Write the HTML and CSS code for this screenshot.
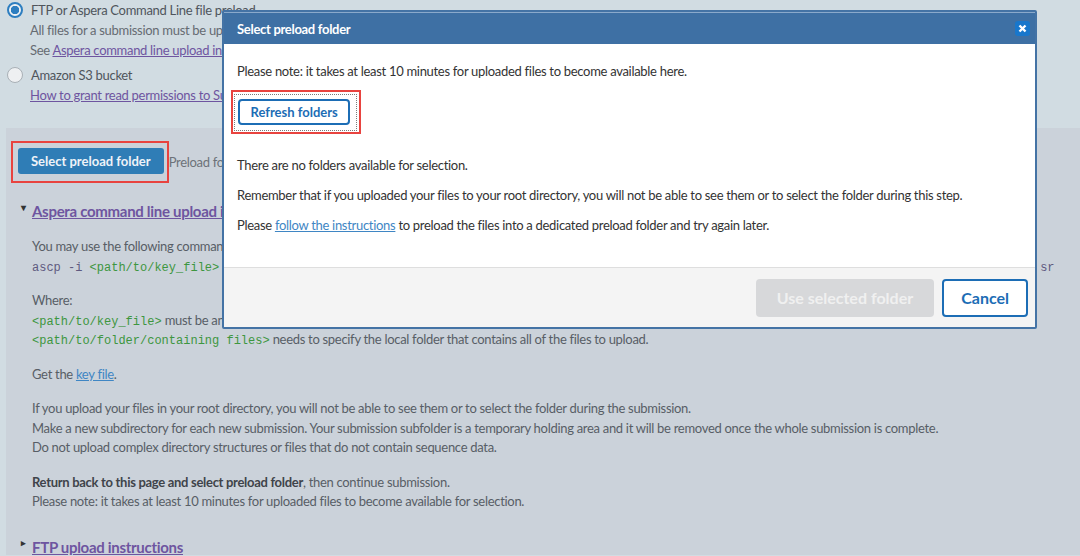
FILE: index.html
```html
<!DOCTYPE html>
<html lang="en">
<head>
    <meta charset="UTF-8">
    <meta name="viewport" content="width=device-width, initial-scale=1.0">
    <title>Select preload folder</title>
    <link rel="stylesheet" href="styles.css">
</head>
<body>
    <div class="options">
        <div class="option">
            <div class="option-title"><span class="radio checked"></span>FTP or Aspera Command Line file preload</div>
            <div class="option-text">All files for a submission must be uploaded into a dedicated preload folder.</div>
            <div class="option-text">See <a href="#" class="visited">Aspera command line upload instructions</a> below.</div>
        </div>
        <div class="option">
            <div class="option-title"><span class="radio"></span>Amazon S3 bucket</div>
            <div class="option-text"><a href="#" class="visited">How to grant read permissions to Submission Portal</a></div>
        </div>
    </div>

    <div class="panel">
        <div class="select-row">
            <span class="highlight"><button class="btn-primary">Select preload folder</button></span>
            <span class="muted">Preload folder: not selected</span>
        </div>

        <div class="section">
            <div class="section-title"><span class="caret">&#9662;</span><a href="#" class="visited">Aspera command line upload instructions</a></div>
            <div class="section-body">
                <div class="group">
                    <p>You may use the following command to upload files into a new preload folder:</p>
                    <p><code class="cmd">ascp -i </code><code class="arg">&lt;path/to/key_file&gt;</code><code class="cmd"> -QT -l300M -L- </code><code class="arg">&lt;path/to/folder/containing files&gt;</code><code class="cmd"> Webin-XXXXX@webin.ebi.ac.uk:. -P33001 --mode=send --host=ebi.uk sr</code></p>
                </div>
                <div class="group">
                    <p>Where:</p>
                    <p><code class="arg">&lt;path/to/key_file&gt;</code> must be an absolute path to the downloaded key file.</p>
                    <p><code class="arg">&lt;path/to/folder/containing files&gt;</code> needs to specify the local folder that contains all of the files to upload.</p>
                </div>
                <div class="group">
                    <p>Get the <a href="#">key file</a>.</p>
                </div>
                <div class="group">
                    <p>If you upload your files in your root directory, you will not be able to see them or to select the folder during the submission.</p>
                    <p>Make a new subdirectory for each new submission. Your submission subfolder is a temporary holding area and it will be removed once the whole submission is complete.</p>
                    <p>Do not upload complex directory structures or files that do not contain sequence data.</p>
                </div>
                <div class="group">
                    <p><b>Return back to this page and select preload folder</b>, then continue submission.</p>
                    <p>Please note: it takes at least 10 minutes for uploaded files to become available for selection.</p>
                </div>
            </div>
        </div>

        <div class="section next">
            <div class="section-title"><span class="caret small">&#9656;</span><a href="#" class="visited">FTP upload instructions</a></div>
        </div>
    </div>

    <div class="dialog">
        <div class="dialog-header">
            <span>Select preload folder</span>
            <button class="dialog-close">
                <svg width="9" height="9" viewBox="0 0 9 9"><path d="M1.5 1.5 L7.5 7.5 M7.5 1.5 L1.5 7.5" stroke="#fff" stroke-width="2.4"/></svg>
            </button>
        </div>
        <div class="dialog-body">
            <p>Please note: it takes at least 10 minutes for uploaded files to become available here.</p>
            <div class="refresh-wrap">
                <span class="highlight small"><span class="focus-ring"><button class="btn-outline small">Refresh folders</button></span></span>
            </div>
            <p>There are no folders available for selection.</p>
            <p>Remember that if you uploaded your files to your root directory, you will not be able to see them or to select the folder during this step.</p>
            <p>Please <a href="#">follow the instructions</a> to preload the files into a dedicated preload folder and try again later.</p>
        </div>
        <div class="dialog-footer">
            <button class="btn-disabled">Use selected folder</button>
            <button class="btn-outline">Cancel</button>
        </div>
    </div>
</body>
</html>
```

FILE: styles.css
```css
body {
    font-family: Lato, "Open Sans", sans-serif;
    font-size: 13px;
    letter-spacing: -0.3px;
    margin: 0;
    padding: 0;
    background-color: #d1dce2;
    color: #585e66;
    overflow: hidden;
    height: 556px;
    position: relative;
}
a {
    color: #3f86c4;
}
a.visited {
    color: #6e55a0;
}
.options {
    padding-left: 7px;
}
.option {
    margin-bottom: 5px;
}
.option-title {
    display: flex;
    align-items: center;
    line-height: 20px;
    color: #4f555c;
}
.option-text {
    line-height: 20px;
    padding-left: 23px;
    color: #666b72;
}
.radio {
    width: 14px;
    height: 14px;
    border-radius: 50%;
    border: 1px solid #a9b0b6;
    background: #eef0f2;
    margin-right: 8px;
    box-sizing: content-box;
}
.radio.checked {
    border: 2px solid #2d7ec0;
    width: 12px;
    height: 12px;
    background: radial-gradient(circle, #2d7ec0 0 4px, #eef1f3 4.5px);
}
.panel {
    margin-left: 6px;
    margin-top: 23px;
    background-color: #cbd2da;
    padding: 13px 0 0 5px;
    height: 427px;
    box-sizing: border-box;
    overflow: hidden;
}
.select-row {
    display: flex;
    align-items: center;
}
.highlight {
    display: inline-block;
    border: 2px solid #e8433f;
    padding: 5px 3px 7px 5px;
}
.btn-primary {
    display: block;
    font-family: inherit;
    font-size: 13px;
    font-weight: bold;
    color: #eef3f8;
    background-color: #2f7db6;
    border: none;
    border-radius: 3px;
    height: 26px;
    padding: 0 13px;
}
.muted {
    color: #6d7279;
}
.section-title {
    margin-top: 17px;
    padding-left: 10px;
    font-size: 15px;
    font-weight: bold;
    line-height: 22px;
}
.caret {
    display: inline-block;
    width: 11px;
    font-size: 10px;
    color: #333;
    vertical-align: top;
    line-height: 14px;
}
.caret.small {
    font-size: 9px;
}
.section-body {
    padding: 15px 0 0 21px;
}
.group {
    margin-bottom: 15px;
}
.group p {
    margin: 0;
    line-height: 19.5px;
    white-space: nowrap;
}
code {
    font-family: "Liberation Mono", monospace;
    font-size: 12px;
    line-height: 1;
    letter-spacing: 0;
}
.cmd {
    color: #5f5a80;
}
.arg {
    color: #3d9640;
}
.group b {
    color: #3f444a;
}
.section.next .section-title {
    margin-top: 24px;
}

.dialog {
    position: absolute;
    left: 222px;
    top: 10px;
    width: 815px;
    height: 319px;
    box-sizing: border-box;
    border: 2px solid #4473a5;
    border-radius: 2px;
    background: white;
    display: flex;
    flex-direction: column;
    color: #333;
}
.dialog-header {
    background-color: #3e70a4;
    color: white;
    font-weight: bold;
    height: 31px;
    display: flex;
    align-items: center;
    justify-content: space-between;
    padding: 0 5px 0 13px;
    border-top: 1px solid #8aa9cb;
}
.dialog-close {
    width: 15px;
    height: 15px;
    padding: 0;
    border: none;
    border-radius: 3px;
    background-color: #1877cc;
    display: flex;
    align-items: center;
    justify-content: center;
}
.dialog-body {
    flex: 1;
    padding: 18px 13px 0;
    border-bottom: 1px solid #dedede;
}
.dialog-body p {
    margin: 0 0 11px;
    line-height: 19px;
}
.refresh-wrap {
    display: flex;
    margin: -2px 0 22px -6px;
}
.highlight.small {
    padding: 2px 2px 1px 1px;
}
.focus-ring {
    display: block;
    border: 1px dotted #7a7a7a;
    padding: 4px 6px 5px 3px;
}
.focus-ring button {
    display: block;
}
.btn-outline {
    font-family: inherit;
    font-weight: bold;
    font-size: 16px;
    color: #1c6db5;
    background: white;
    border: 2px solid #1c6db5;
    border-radius: 4px;
    height: 38px;
    padding: 0 17px;
}
.btn-outline.small {
    font-size: 13px;
    height: 26px;
    padding: 0 10.5px;
}
.dialog-footer {
    height: 59px;
    background: #f4f4f4;
    display: flex;
    justify-content: flex-end;
    align-items: center;
    gap: 8px;
    padding-right: 7px;
}
.btn-disabled {
    font-family: inherit;
    font-weight: bold;
    font-size: 16px;
    color: #f0f0f0;
    background: #d7d8da;
    border: none;
    border-radius: 4px;
    height: 38px;
    padding: 0 21px;
}
```
